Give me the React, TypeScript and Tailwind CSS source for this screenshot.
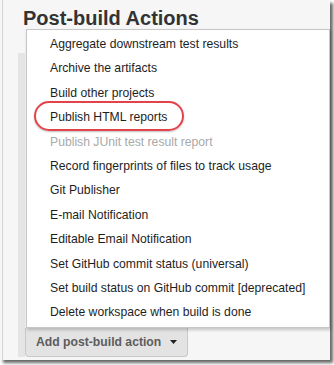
const items: { label: string; disabled?: boolean }[] = [
  { label: "Aggregate downstream test results" },
  { label: "Archive the artifacts" },
  { label: "Build other projects" },
  { label: "Publish HTML reports" },
  { label: "Publish JUnit test result report", disabled: true },
  { label: "Record fingerprints of files to track usage" },
  { label: "Git Publisher" },
  { label: "E-mail Notification" },
  { label: "Editable Email Notification" },
  { label: "Set GitHub commit status (universal)" },
  { label: "Set build status on GitHub commit [deprecated]" },
  { label: "Delete workspace when build is done" },
];

export default function App() {
  return (
    <div className="w-[334px] h-[365px] bg-white overflow-hidden font-['Liberation_Sans',Arial,sans-serif]">
      <div className="w-[330px] h-[360px] bg-[#f6f6f6] shadow-[3px_3px_3px_rgba(0,0,0,0.6)] flex">
        <div className="w-[2px] shrink-0" />
        <div className="w-px shrink-0 bg-[#d4d4d4]" />
        <div className="flex-1 flex flex-col">
          <h2 className="h-[29px] pl-[20px] pt-[8px] text-[20px] leading-[20px] font-bold text-[#333]">
            Post-build Actions
          </h2>
          <div className="flex flex-1">
            <div className="w-[15px] shrink-0" />
            <div className="w-[7px] shrink-0 mt-[24px] h-[304px] bg-[#e5e5e5]" />
            <div className="flex flex-col">
              <div className="relative ml-px w-[304px] h-[299px] bg-white border border-[#c6c6c6] shadow-[1px_2px_3px_rgba(0,0,0,0.2)] py-[2px]">
                {items.map((item) => (
                  <div
                    key={item.label}
                    className={`h-[24.4px] pl-[23px] flex items-center text-[12.2px] whitespace-nowrap ${
                      item.disabled ? "text-[#a9a9a9]" : "text-[#1e1e1e]"
                    }`}
                  >
                    {item.label}
                  </div>
                ))}
                <div className="absolute left-[7px] top-[71px] w-[150px] h-[30px] rounded-full border-2 border-[#e2434b] shadow-[0_1px_2px_rgba(0,0,0,0.25)]" />
              </div>
              <button className="w-[163px] h-[29px] bg-[#e3e3e3] border border-t-0 border-[#c9c9c9] rounded-b-[4px] pl-[10px] flex items-center gap-[9px] text-[12.2px] font-bold text-[#5c5c5c]">
                Add post-build action
                <svg width="7" height="4" viewBox="0 0 7 4">
                  <path d="M0 0h7L3.5 4z" fill="#222" />
                </svg>
              </button>
            </div>
          </div>
        </div>
      </div>
    </div>
  );
}
